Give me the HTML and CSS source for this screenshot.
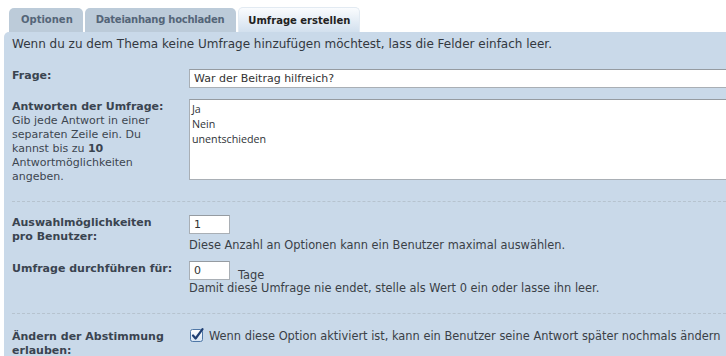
FILE: index.html
```html
<!DOCTYPE html>
<html lang="de">
<head>
<meta charset="utf-8">
<title>Umfrage erstellen</title>
<link rel="stylesheet" href="styles.css">
</head>
<body>
<div class="tabs">
  <div class="tab">Optionen</div>
  <div class="tab tight">Dateianhang hochladen</div>
  <div class="tab active">Umfrage erstellen</div>
</div>
<div class="panel">
  <p class="intro">Wenn du zu dem Thema keine Umfrage hinzufügen möchtest, lass die Felder einfach leer.</p>

  <div class="row r1">
    <div class="label"><b>Frage:</b></div>
    <div class="field"><div class="input wide">War der Beitrag hilfreich?</div></div>
  </div>

  <div class="row r2">
    <div class="label"><b>Antworten der Umfrage:</b><br>Gib jede Antwort in einer separaten Zeile ein. Du kannst bis zu <b>10</b> Antwortmöglichkeiten angeben.</div>
    <div class="field"><div class="textarea">Ja<br>Nein<br>unentschieden</div></div>
  </div>

  <div class="sep s1"></div>

  <div class="row r3">
    <div class="label"><b>Auswahlmöglichkeiten<br>pro Benutzer:</b></div>
    <div class="field">
      <div class="input small">1</div>
      <div class="desc d1">Diese Anzahl an Optionen kann ein Benutzer maximal auswählen.</div>
    </div>
  </div>

  <div class="row r4">
    <div class="label"><b>Umfrage durchführen für:</b></div>
    <div class="field">
      <div class="inline"><div class="input small">0</div><span class="unit">Tage</span></div>
      <div class="desc d2">Damit diese Umfrage nie endet, stelle als Wert 0 ein oder lasse ihn leer.</div>
    </div>
  </div>

  <div class="sep s2"></div>

  <div class="row r5">
    <div class="label"><b>Ändern der Abstimmung erlauben:</b></div>
    <div class="field check">
      <svg class="cb" width="14" height="14" viewBox="0 0 14 14">
        <defs>
          <linearGradient id="g" x1="0" y1="0" x2="0" y2="1">
            <stop offset="0" stop-color="#ffffff"/>
            <stop offset="1" stop-color="#d4e2f2"/>
          </linearGradient>
        </defs>
        <rect x="0.5" y="1.5" width="12" height="12" rx="2" fill="url(#g)" stroke="#4f77a6"/>
        <path d="M3 7.5 L5.6 10.5 L12.5 1.2" fill="none" stroke="#1f3f73" stroke-width="2.2" stroke-linecap="round" stroke-linejoin="round"/>
      </svg>
      <span>Wenn diese Option aktiviert ist, kann ein Benutzer seine Antwort später nochmals ändern</span>
    </div>
  </div>
</div>
</body>
</html>
```

FILE: styles.css
```css
html, body {
  margin: 0;
  padding: 0;
  overflow: hidden;
  background: #ffffff;
}
body {
  font-family: "DejaVu Sans", Verdana, sans-serif;
  font-size: 11px;
  color: #3a3f47;
  width: 726px;
  height: 356px;
}
.tabs {
  display: flex;
  align-items: flex-end;
  gap: 2px;
  padding: 7px 0 0 9px;
  height: 25px;
}
.tab {
  height: 24px;
  box-sizing: border-box;
  padding: 0 10px 0 12px;
  line-height: 24px;
  font-weight: bold;
  font-size: 10px;
  color: #546578;
  background: #bccbd9;
  border-radius: 5px 5px 0 0;
}
.tab.tight {
  letter-spacing: -0.25px;
  padding: 0 12px 0 11px;
}
.tab.active {
  height: 25px;
  line-height: 25px;
  padding: 0 9px 0 9px;
  color: #222222;
  background: linear-gradient(#fafcfe, #d2e0ee);
  border: 1px solid #e2eaf2;
  border-bottom: none;
}
.panel {
  margin-left: 4px;
  background: #c9d9e9;
  border-radius: 5px 0 0 0;
  padding: 4px 0 40px 8px;
}
.intro {
  margin: 0 0 17px;
  font-size: 12px;
  line-height: 16px;
  color: #333840;
}
.row {
  display: grid;
  grid-template-columns: 166px 1fr;
  column-gap: 11px;
}
.label {
  line-height: 14px;
  padding-top: 1px;
  color: #3d4650;
}
.label b {
  color: #3a4450;
}
.r1 .label { padding-top: 0; }
.r2 { margin-top: 11px; }
.input {
  box-sizing: border-box;
  height: 19px;
  background: #ffffff;
  border: 1px solid #a9afb5;
  border-top-color: #959ba1;
  padding: 0 4px;
  line-height: 17px;
  color: #333;
  white-space: nowrap;
}
.input.wide {
  width: 620px;
}
.input.small {
  width: 41px;
  height: 19px;
}
.textarea {
  box-sizing: border-box;
  width: 620px;
  height: 81px;
  background: #ffffff;
  border: 1px solid #a9afb5;
  border-top-color: #959ba1;
  padding: 2px 2px;
  font-family: "Open Sans", "DejaVu Sans", sans-serif;
  font-size: 10.7px;
  line-height: 15px;
  color: #2f3338;
}
.sep {
  border-top: 1px dashed #b6c3cf;
  height: 0;
}
.s1 { margin-top: 17px; }
.r3 { margin-top: 13px; }
.desc {
  font-size: 11.4px;
  line-height: 14px;
  color: #3a3f47;
}
.d1 { margin-top: 4px; }
.r4 { margin-top: 9px; }
.inline {
  display: flex;
  align-items: flex-end;
  gap: 8px;
}
.unit {
  font-size: 11.4px;
  line-height: 14px;
  margin-bottom: -2px;
}
.d2 { margin-top: 1px; }
.s2 { margin-top: 18px; }
.r5 { margin-top: 15px; }
.check {
  display: flex;
  align-items: flex-start;
  gap: 5px;
  white-space: nowrap;
  font-size: 11.4px;
  line-height: 14px;
}
.cb {
  flex: none;
  margin-left: 1px;
  margin-top: -1px;
}
```
